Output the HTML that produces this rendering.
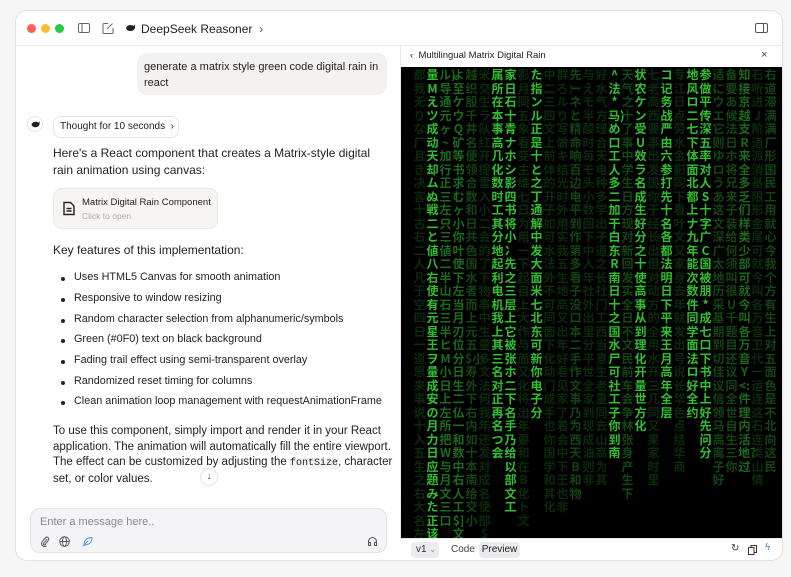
<!DOCTYPE html>
<html><head><meta charset="utf-8">
<style>
*{box-sizing:border-box;margin:0;padding:0}
body{width:791px;height:577px;background:#f6f6f6;font-family:"Liberation Sans","Noto Sans CJK SC",sans-serif;color:#1f1f1f;position:relative;overflow:hidden}
.win{position:absolute;left:15px;top:10px;width:768px;height:551px;background:#fff;border:1px solid #e2e2e2;border-radius:12px;overflow:hidden}
.abs{position:absolute;white-space:nowrap}
.wrap{white-space:normal}
.dot{position:absolute;top:13px;width:9px;height:9px;border-radius:50%}
.t12{font-size:12px}
.bubble{left:121px;top:42px;width:250px;height:42px;background:#f4f2f1;border-radius:10px;padding:6px 7px;font-size:11px;line-height:16px}
.p{font-size:12px;line-height:16px;color:#222}
ul{list-style:none}
li{position:absolute;left:58px;font-size:10.8px;color:#222;white-space:nowrap}
li:before{content:"";position:absolute;left:-13px;top:6px;width:4px;height:4px;border-radius:50%;background:#222}
.matrix{position:absolute;left:385px;top:56px;width:382px;height:471px;background:#000;overflow:hidden}
.col{position:absolute;top:1px;width:13px;font-size:12px;line-height:13.5px;word-break:break-all;font-family:"Noto Sans CJK SC",sans-serif;font-weight:bold;text-align:center;white-space:normal}
.d{color:#0b2a0b}.m{color:#134513}.b{color:#30c030}.v{color:#1c6a1c}
</style></head><body>
<div class="win">
 <div class="dot" style="left:11px;background:#fe5f57"></div>
 <div class="dot" style="left:25px;background:#febc2e"></div>
 <div class="dot" style="left:39px;background:#28c840"></div>
 <svg class="abs" style="left:62px;top:11px" width="12" height="12" viewBox="0 0 12 12" fill="none" stroke="#666" stroke-width="1"><rect x="0.5" y="1.5" width="11" height="9" rx="1.5"/><line x1="4" y1="1.5" x2="4" y2="10.5"/></svg>
 <svg class="abs" style="left:86px;top:11px" width="12" height="12" viewBox="0 0 12 12" fill="none" stroke="#666" stroke-width="1"><path d="M6 1.5H2a1 1 0 0 0-1 1v8a1 1 0 0 0 1 1h8a1 1 0 0 0 1-1V6"/><path d="M5 7l5.5-5.5"/></svg>
 <svg class="abs" style="left:109px;top:12px" width="11" height="10" viewBox="0 0 11 10"><path d="M1 5c1-3 5-4 8-2l1-2v4c-1 3-5 4-8 2z" fill="#222"/></svg>
 <div class="abs t12" style="left:125px;top:11px;color:#222">DeepSeek Reasoner&nbsp; <span style="color:#555">›</span></div>
 <svg class="abs" style="left:739px;top:11px" width="13" height="12" viewBox="0 0 13 12" fill="none" stroke="#555" stroke-width="1"><rect x="0.5" y="1.5" width="12" height="9" rx="1.5"/><line x1="8.5" y1="1.5" x2="8.5" y2="10.5"/></svg>
 <div class="abs" style="left:0;top:34px;width:768px;height:1px;background:#ececec"></div>

 <div class="abs bubble wrap">generate a matrix style green code digital rain in react</div>
 <div class="abs" style="left:11px;top:105px;width:16px;height:16px;border-radius:50%;border:1px solid #e5e5e5"><svg style="position:absolute;left:2px;top:3px" width="11" height="9" viewBox="0 0 11 10"><path d="M1 5c1-3 5-4 8-2l1-2v4c-1 3-5 4-8 2z" fill="#222"/></svg></div>
 <div class="abs" style="left:37px;top:105px;width:126px;height:22px;border:1px solid #e4e4e4;border-radius:8px;font-size:10px;line-height:20px;padding-left:6px">Thought for 10 seconds &nbsp;›</div>
 <div class="abs p wrap" style="left:37px;top:134px;width:330px;line-height:17px">Here's a React component that creates a Matrix-style digital rain animation using canvas:</div>
 <div class="abs" style="left:37px;top:177px;width:165px;height:41px;background:#f7f5f4;border:1px solid #ebe8e6;border-radius:9px">
  <svg class="abs" style="left:9px;top:12px" width="12" height="15" viewBox="0 0 12 15" fill="none" stroke="#222" stroke-width="1.4"><path d="M1 1.5h6.5L11 5v8.5H1z"/><path d="M3.5 7.5h5M3.5 10h5"/></svg>
  <div class="abs" style="left:28px;top:8px;font-size:9.5px;color:#222">Matrix Digital Rain Component</div>
  <div class="abs" style="left:28px;top:22px;font-size:8.5px;color:#aaa">Click to open</div>
 </div>
 <div class="abs p" style="left:37px;top:231px">Key features of this implementation:</div>
 <ul>
  <li style="top:260px">Uses HTML5 Canvas for smooth animation</li>
  <li style="top:281px">Responsive to window resizing</li>
  <li style="top:302px">Random character selection from alphanumeric/symbols</li>
  <li style="top:322px">Green (#0F0) text on black background</li>
  <li style="top:343px">Fading trail effect using semi-transparent overlay</li>
  <li style="top:364px">Randomized reset timing for columns</li>
  <li style="top:384px">Clean animation loop management with requestAnimationFrame</li>
 </ul>
 <div class="abs p wrap" style="left:37px;top:413px;width:345px;line-height:15.5px;font-size:11.5px">To use this component, simply import and render it in your React application. The animation will automatically fill the entire viewport. The effect can be customized by adjusting the <span style="font-family:'Liberation Mono',monospace;font-size:10px;background:#f3f3f3">fontSize</span>, character set, or color values.</div>
 <div class="abs" style="left:184px;top:457px;width:18px;height:18px;border-radius:50%;border:1px solid #e5e5e5;background:#fff;font-size:10px;text-align:center;line-height:16px;color:#444">↓</div>

 <div class="abs" style="left:14px;top:497px;width:357px;height:45px;background:#f4f4f6;border:1px solid #e3e3e6;border-radius:10px">
  <div class="abs" style="left:9px;top:7px;font-size:11px;color:#8a8a8a">Enter a message here..</div>
  <svg class="abs" style="left:9px;top:27px" width="10" height="11" viewBox="0 0 10 11" fill="none" stroke="#555" stroke-width="1"><path d="M7 3L3.5 7.5a1 1 0 0 0 1.5 1.2L8.5 4a2 2 0 0 0-3-2.5L2 6a3 3 0 0 0 4.5 3.8"/></svg>
  <svg class="abs" style="left:28px;top:27px" width="11" height="11" viewBox="0 0 11 11" fill="none" stroke="#555" stroke-width="0.9"><circle cx="5.5" cy="5.5" r="4.8"/><ellipse cx="5.5" cy="5.5" rx="2" ry="4.8"/><line x1="0.7" y1="5.5" x2="10.3" y2="5.5"/></svg>
  <svg class="abs" style="left:51px;top:27px" width="11" height="11" viewBox="0 0 11 11" fill="none" stroke="#4a8ef0" stroke-width="0.9"><path d="M2 9C2 4 5 1.5 10 1.5 10 6.5 7 9 2 9z"/><path d="M1 10L6 5"/></svg>
  <svg class="abs" style="left:336px;top:27px" width="11" height="11" viewBox="0 0 11 11" fill="none" stroke="#555" stroke-width="1"><path d="M1.5 8V5.5a4 4 0 0 1 8 0V8"/><rect x="1.5" y="6.5" width="2" height="3"/><rect x="7.5" y="6.5" width="2" height="3"/></svg>
 </div>

 <div class="abs" style="left:384px;top:35px;width:1px;height:516px;background:#e8e8e8"></div>
 <div class="abs" style="left:394px;top:39px;font-size:9.5px;color:#222">‹&nbsp; Multilingual Matrix Digital Rain</div>
 <div class="abs" style="left:745px;top:38px;font-size:11px;color:#444">×</div>

 <div class="matrix">
  <div class="col d" style="left:12px">都我无り な厂且き决言十古右二人凡于空四日一道思来事说十入五生之右大名左正年手为</div>
  <div class="col b" style="left:25px">量M え ツ成动天却ムぬ戦二と値八右使有元星王ヲ量成安の月力日应題みた正该の三</div>
  <div class="col v" style="left:38px">ル}导通元 ヶ ~加行正三左只三値二半山石三半ヒM小日上左所把W与月文三口</div>
  <div class="col v" style="left:51px">よ至ケウQ矿等书求むヶ小你叶使下左当月刃位分日生二仏一和数中右人工$]文</div>
  <div class="col m" style="left:64px">越 织殷千井名便领合数和日共色国水者而上元五$小寿外下右内如十本南给 交小</div>
  <div class="col d" style="left:77px">米交生ラ队红开提雷入小二会的了下物事中生量多文法何我年还发对成名使部$</div>
  <div class="col b" style="left:90px">属       所在本事高几化数时工其分地起利电机我上其三名对正再名つ会</div>
  <div class="col b" style="left:103px">家日石十青ナホシ影四书将小冫先之三层上它被张ホ二下名手乃给以部文工</div>
  <div class="col d" style="left:116px">影月同五象看变主维七日为用一下起自上大作与面又化将出年要和在B化ト文</div>
  <div class="col b" style="left:129px">た指          ンル正是十と之丁通解中发大面米七北东可新你电子分</div>
  <div class="col d" style="left:142px">中二三四文上前体的开子如可水法外不可同面下化动门成手也你国学和其化</div>
  <div class="col d" style="left:155px">群ろ：ルり写做キ结光时外用实我五生地高又出年好看见家了着会中下王也非</div>
  <div class="col m" style="left:168px">先ー ネと精命响百边电平到作第多看子没口本二手作文事乃为西天B和物</div>
  <div class="col d" style="left:181px">与え モ半酸时毎モ头小数回下中人年社外出里分平世全家到现成油则非</div>
  <div class="col d" style="left:194px">好水气方理合天电种多学出子道之长社门工西当意生老量同去山高为其</div>
  <div class="col b" style="left:207px">^法*马)め     口工人多二加干白东R南日十之国水尸可社工子你到南</div>
  <div class="col m" style="left:220px">天气之十了事中学生日方现对新回发实全日不文民前车会争林张身产生下</div>
  <div class="col b" style="left:233px">状农ケン受U效ラ       名成生好分之十使高事从到理化开量世方化</div>
  <div class="col d" style="left:246px">七老高西要事出发国你于经长出但对动方的全用水开三几同又果家时里</div>
  <div class="col b" style="left:259px">コ记务战严由六参打       先十名各都法明日下平来王月高年全层</div>
  <div class="col d" style="left:272px">专江日点劳水金影 同下看 叶文又家身去年就发出号说长华色点结华商</div>
  <div class="col b" style="left:285px">地风       ロ二七下体面北都上ナ九年能次数件同学面法ロ好全约</div>
  <div class="col b" style="left:298px">参做平传深五率对人S 十字广C国被朋*成 七口下书中上好先问分</div>
  <div class="col m" style="left:311px">适にウエ它则ゆロうあ这文深广太地历采基期到切佳议信领马高离子好</div>
  <div class="col m" style="left:324px">备要あ候法日ホ将兄来子装给何须叫很U千题目还议同全世自生三你</div>
  <div class="col v" style="left:337px">知接京越支R来全多乏们样类少部 可就今叫各万音Y<:件理内活地?过</div>
  <div class="col d" style="left:350px">石听进J阶道派消基限形金尾可就今叫各万音卫代一运连这石连类山情</div>
  <div class="col m" style="left:363px">右道滞满满厂形国民工用就心今我个方有生上对五面色是不北向这民</div>
 </div>

 <div class="abs" style="left:384px;top:527px;width:384px;height:24px;background:#fff;border-top:1px solid #e8e8e8"></div>
 <div class="abs" style="left:395px;top:531px;width:28px;height:16px;background:#ececee;border-radius:4px;font-size:10px;line-height:16px;padding-left:5px;color:#333">v1 <span style="font-size:8px;color:#888">⌄</span></div>
 <div class="abs" style="left:435px;top:533px;font-size:10px;color:#444">Code</div>
 <div class="abs" style="left:463px;top:531px;width:41px;height:16px;background:#ececee;border-radius:4px;font-size:10px;line-height:16px;text-align:center;color:#222">Preview</div>
 <div class="abs" style="left:715px;top:532px;font-size:10px;color:#333">↻</div>
 <svg class="abs" style="left:732px;top:534px" width="9" height="10" viewBox="0 0 9 10" fill="none" stroke="#333" stroke-width="1"><rect x="0.5" y="2.5" width="5.5" height="7"/><path d="M3 2.5V0.5h5.5v7H6"/></svg>
 <div class="abs" style="left:749px;top:531px;font-size:10px;color:#3a82f6">ϟ</div>
</div>
</body></html>
